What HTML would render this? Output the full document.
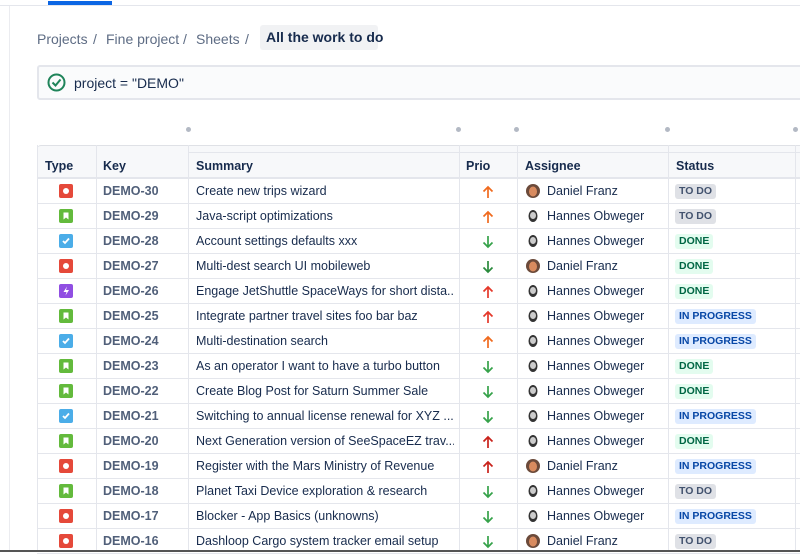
<!DOCTYPE html>
<html><head><meta charset="utf-8">
<style>
*{box-sizing:border-box;margin:0;padding:0}
body{width:800px;height:552px;overflow:hidden;background:#fff;font-family:"Liberation Sans",sans-serif;color:#172b4d;position:relative}
.abs{position:absolute}
.crumb{top:31px;font-size:14px;color:#5e6c84;white-space:nowrap}
.row{position:absolute;left:37px;width:800px;height:25px;border-bottom:1px solid #e4e6ec}
.c{position:absolute;top:0;height:25px;line-height:25px;font-size:12.5px;white-space:nowrap;overflow:hidden}
.vl{position:absolute;top:145px;bottom:0;width:1px;background:#e4e6ec}
.badge{display:inline-block;font-size:10.5px;font-weight:bold;line-height:15px;padding:0 4px;border-radius:3px;vertical-align:middle}
.todo{background:#dfe1e6;color:#42526e}.done{background:#e3fcef;color:#006644}.prog{background:#deebff;color:#0747a6}
.dot{position:absolute;top:127px;width:5px;height:5px;border-radius:50%;background:#b3b9c4}
</style></head><body>
<div class="abs" style="left:0;top:5px;width:800px;height:1px;background:#e4e6ec"></div>
<div class="abs" style="left:48px;top:1px;width:64px;height:4px;background:#0c66e4"></div>
<div class="abs" style="left:9px;top:6px;width:1px;height:546px;background:#ebecf0"></div>
<div class="abs crumb" style="left:37px">Projects</div>
<div class="abs crumb" style="left:93px">/</div>
<div class="abs crumb" style="left:106px">Fine project</div>
<div class="abs crumb" style="left:183px">/</div>
<div class="abs crumb" style="left:196px">Sheets</div>
<div class="abs crumb" style="left:245px">/</div>
<div class="abs" style="left:260px;top:25px;width:118px;height:25px;background:#f1f2f4;border-radius:3px;font-size:14px;font-weight:bold;line-height:25px;padding-left:6px;color:#172b4d;white-space:nowrap">All the work to do</div>
<div class="abs" style="left:37px;top:65px;width:800px;height:35px;border:2px solid #e4e6ec;border-radius:3px;background:#fafbfc"></div>
<svg class="abs" style="left:47px;top:73px" width="19" height="19" viewBox="0 0 19 19"><circle cx="9.5" cy="9.5" r="8" fill="none" stroke="#1f845a" stroke-width="2"/><path d="M5.5 9.5l3 3 5-6" fill="none" stroke="#1f845a" stroke-width="2"/></svg>
<div class="abs" style="left:74px;top:75px;font-size:14px">project = "DEMO"</div>
<div class="dot" style="left:186px"></div><div class="dot" style="left:456px"></div><div class="dot" style="left:514px"></div><div class="dot" style="left:665px"></div><div class="dot" style="left:793px"></div>
<div class="abs" style="left:37px;top:145px;width:800px;height:34px;background:#f7f8fa;border-top:1px solid #dfe1e6;border-bottom:2px solid #e4e6ec;border-radius:4px 0 0 0"></div>
<div class="abs" style="left:188px;top:152px;width:612px;height:1px;background:#e4e6ec"></div>
<div class="c" style="left:45px;top:154px;font-weight:bold">Type</div>
<div class="c" style="left:103px;top:154px;font-weight:bold">Key</div>
<div class="c" style="left:196px;top:154px;font-weight:bold">Summary</div>
<div class="c" style="left:466px;top:154px;font-weight:bold">Prio</div>
<div class="c" style="left:525px;top:154px;font-weight:bold">Assignee</div>
<div class="c" style="left:676px;top:154px;font-weight:bold">Status</div>
<div id="rows"></div>
<div class="vl" style="left:37px"></div><div class="vl" style="left:96px"></div><div class="vl" style="left:188px"></div><div class="vl" style="left:459px"></div><div class="vl" style="left:517px"></div><div class="vl" style="left:668px"></div><div class="vl" style="left:795px"></div>
<div class="abs" style="left:0;top:550px;width:800px;height:2px;background:#555"></div>
<script>
var R=[["b",30,"Create new trips wizard","o","D","todo"],["s",29,"Java-script optimizations","o","H","todo"],["t",28,"Account settings defaults xxx","g","H","done"],["b",27,"Multi-dest search UI mobileweb","G","D","done"],["e",26,"Engage JetShuttle SpaceWays for short dista...","r","H","done"],["s",25,"Integrate partner travel sites foo bar baz","r","H","prog"],["t",24,"Multi-destination search","o","H","prog"],["s",23,"As an operator I want to have a turbo button","g","H","done"],["s",22,"Create Blog Post for Saturn Summer Sale","g","H","done"],["t",21,"Switching to annual license renewal for XYZ ...","g","H","prog"],["s",20,"Next Generation version of SeeSpaceEZ trav...","R","H","done"],["b",19,"Register with the Mars Ministry of Revenue","R","D","prog"],["s",18,"Planet Taxi Device exploration & research","g","H","todo"],["b",17,"Blocker - App Basics (unknowns)","g","H","prog"],["b",16,"Dashloop Cargo system tracker email setup","g","D","todo"]];
var ic={b:'<rect width="14" height="14" rx="2" fill="#e5493a"/><circle cx="7" cy="7" r="3" fill="#fff"/>',s:'<rect width="14" height="14" rx="2" fill="#63ba3c"/><path d="M4.5 3.5h5v7l-2.5-2-2.5 2z" fill="#fff"/>',t:'<rect width="14" height="14" rx="2" fill="#4bade8"/><path d="M4 7l2 2 4-4.5" stroke="#fff" stroke-width="1.8" fill="none"/>',e:'<rect width="14" height="14" rx="2" fill="#904ee2"/><path d="M8 2.5L4.5 8h3l-1 3.5L10 6H7z" fill="#fff"/>'};
var col={o:"#f06a1e",r:"#e5382a",R:"#c9221b",g:"#36a24a",G:"#2a8a3c"};
var st={todo:"TO DO",done:"DONE",prog:"IN PROGRESS"};
var h="";
R.forEach(function(r,i){var y=179+i*25;var up=(r[3]=="o"||r[3]=="r"||r[3]=="R");
var arr=up?'<path d="M6 13V2M1.5 6.5L6 2l4.5 4.5"/>':'<path d="M6 1v11M1.5 7.5L6 12l4.5-4.5"/>';
var av=r[4]=="D"?'<circle cx="7" cy="7" r="7" fill="#6b4a3a"/><ellipse cx="7" cy="7.5" rx="4" ry="5" fill="#d98b5f"/>':'<circle cx="7" cy="7" r="7" fill="#fff"/><ellipse cx="7" cy="7" rx="4.5" ry="6" fill="#333"/><ellipse cx="7" cy="6.5" rx="3" ry="3.5" fill="#ccc"/>';
h+='<div class="row" style="top:'+y+'px"></div>'+
'<svg class="abs" style="left:59px;top:'+(y+5)+'px" width="14" height="14">'+ic[r[0]]+'</svg>'+
'<div class="c" style="left:103px;top:'+y+'px;color:#505f79;font-weight:bold">DEMO-'+r[1]+'</div>'+
'<div class="c" style="left:196px;top:'+y+'px;width:258px">'+r[2]+'</div>'+
'<svg class="abs" style="left:482px;top:'+(y+6)+'px" width="12" height="14" fill="none" stroke="'+col[r[3]]+'" stroke-width="1.7">'+arr+'</svg>'+
'<svg class="abs" style="left:526px;top:'+(y+5)+'px" width="14" height="14">'+av+'</svg>'+
'<div class="c" style="left:547px;top:'+y+'px">'+(r[4]=="D"?"Daniel Franz":"Hannes Obweger")+'</div>'+
'<div class="c" style="left:675px;top:'+y+'px"><span class="badge '+r[5]+'">'+st[r[5]]+'</span></div>';});
document.getElementById("rows").innerHTML=h;
</script>
</body></html>
